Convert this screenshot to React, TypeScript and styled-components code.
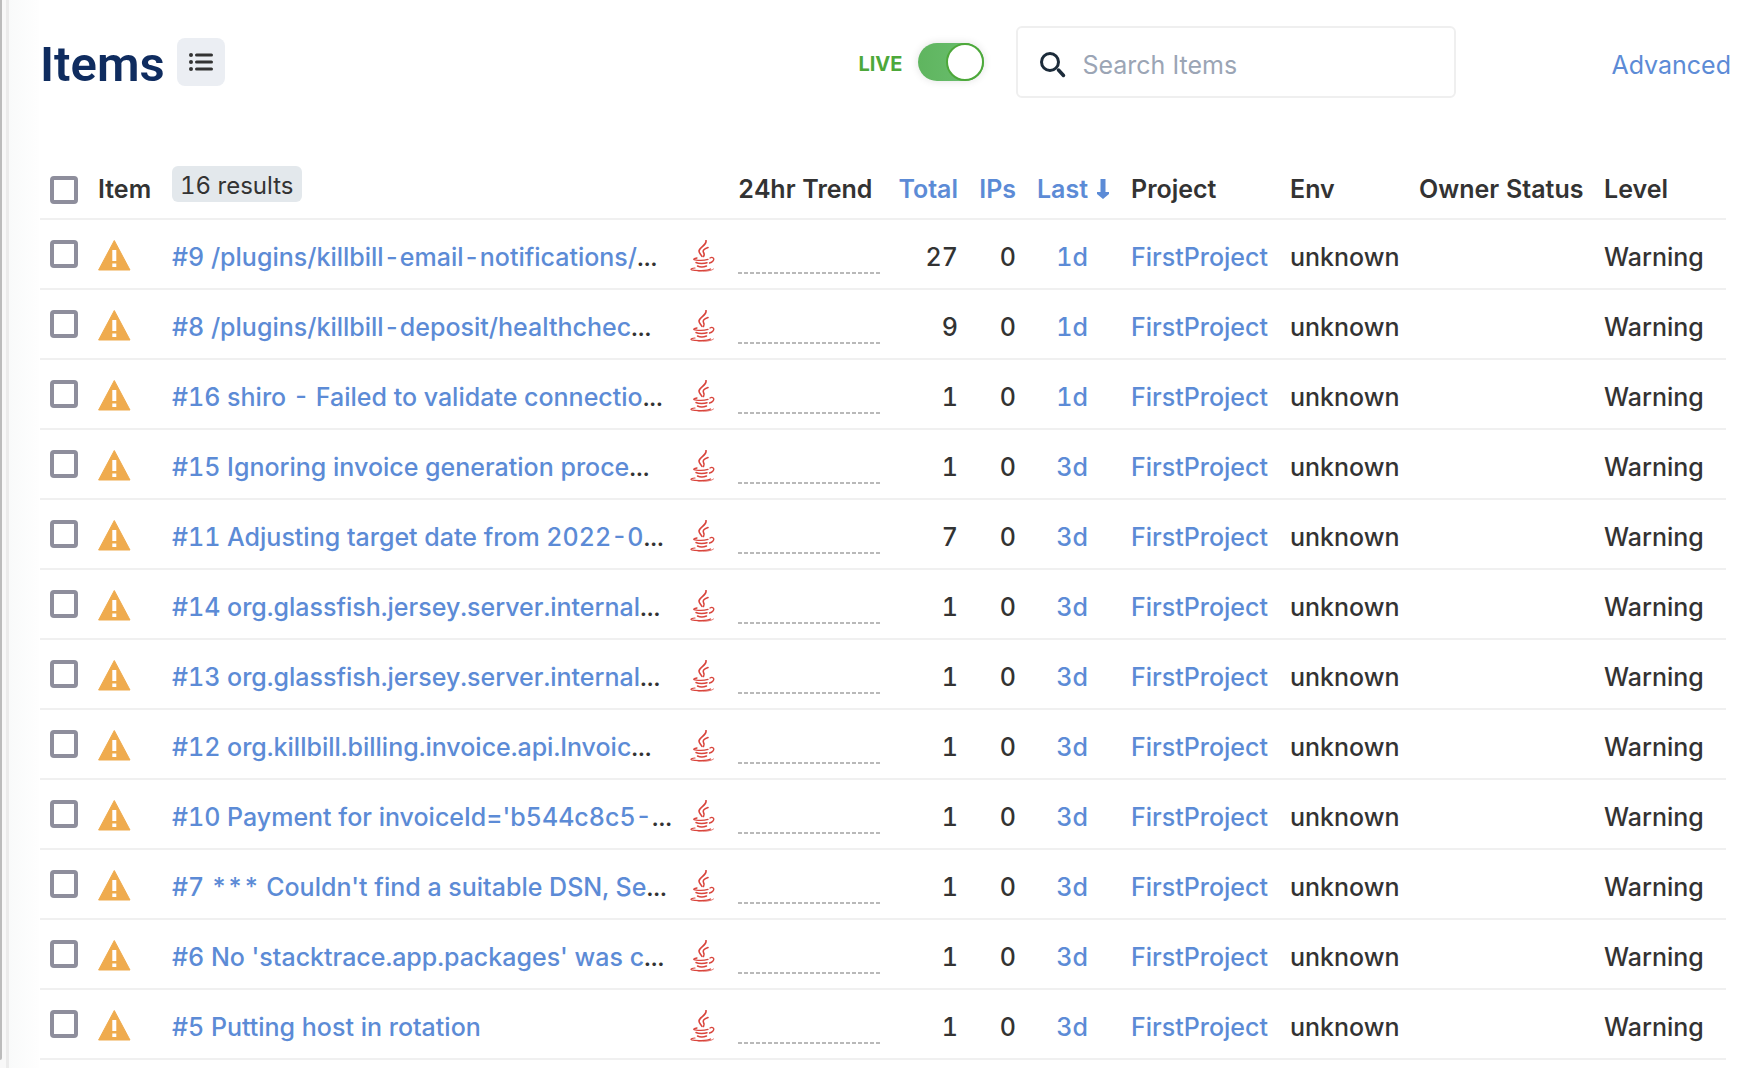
import React from "react";
import styled, { createGlobalStyle } from "styled-components";

const GlobalStyle = createGlobalStyle`
  *, *::before, *::after { box-sizing: border-box; }
  body {
    margin: 0;
    background: #fff;
    color: #333;
    font-family: Inter, "Liberation Sans", sans-serif;
    font-size: 25px;
    line-height: 30px;
  }
`;

const Page = styled.div`
  display: flex;
  min-height: 100vh;
`;

const Rail = styled.div`
  display: flex;
  flex: 0 0 40px;
  background: linear-gradient(to right, #f8f8f8 9px, #f9fafa 9px, #fefefe 38px, #fff 40px);
`;

const ScrollThumb = styled.div`
  width: 2px;
  margin-bottom: 8px;
  background: #bcbcbc;
  border-bottom-right-radius: 2px;
`;

const RailEdge = styled.div`
  width: 3px;
  margin-left: 4px;
  background: #ebebeb;
`;

const Main = styled.main`
  flex: 1;
  min-width: 0;
  padding-bottom: 8px;
`;

const Header = styled.header`
  display: flex;
  align-items: center;
  height: 149px;
  padding: 0 11px 25px 0;
`;

const Title = styled.h1`
  margin: 6px 12px 0 0;
  color: #0f2c5f;
  font-family: Roboto, sans-serif;
  font-size: 49px;
  font-weight: 600;
  line-height: 56px;
`;

const ListButton = styled.button`
  display: flex;
  align-items: center;
  justify-content: center;
  width: 48px;
  height: 48px;
  padding: 0;
  border: 0;
  border-radius: 8px;
  background: #ebeef3;
`;

const LiveToggle = styled.label`
  display: flex;
  align-items: center;
  gap: 16px;
  margin-left: auto;
  color: #4da83a;
  font-size: 20px;
  font-weight: 700;
`;

const LiveText = styled.span`
  padding-top: 4px;
`;

const Switch = styled.input`
  appearance: none;
  display: flex;
  justify-content: flex-end;
  width: 66px;
  height: 38px;
  margin: 0;
  border-radius: 19px;
  background: linear-gradient(to right, #5fb55f, #6bbf70);
  box-shadow: 0 0 8px rgba(0, 0, 0, 0.12);
  &::before {
    content: "";
    width: 38px;
    height: 38px;
    border: 2px solid #4da83a;
    border-radius: 50%;
    background: #fff;
  }
`;

const SearchBox = styled.label`
  display: flex;
  align-items: center;
  gap: 16px;
  width: 440px;
  height: 72px;
  margin-left: 32px;
  padding: 6px 22px 0;
  border: 2px solid #efefef;
  border-radius: 6px;
`;

const SearchInput = styled.input`
  flex: 1;
  min-width: 0;
  border: 0;
  outline: 0;
  padding: 0;
  background: transparent;
  color: #333;
  font: inherit;
  &::placeholder { color: #9ba5b5; opacity: 1; }
`;

const Advanced = styled.a`
  margin-left: 155px;
  padding-top: 6px;
  color: #5c8bd6;
  text-decoration: none;
`;

const ItemsTable = styled.table`
  width: calc(100% - 16px);
  table-layout: fixed;
  border-collapse: collapse;
  font-variant-numeric: tabular-nums;
`;

const HeadCell = styled.th<{ $align?: string }>`
  height: 70px;
  padding: 10px 0 0;
  border-bottom: 2px solid #f0f0f0;
  font-size: 25px;
  font-weight: 600;
  text-align: ${(p) => p.$align || "left"};
  white-space: nowrap;
`;

const Cell = styled.td<{ $align?: string }>`
  height: 70px;
  padding: 6px 0 0;
  border-bottom: 2px solid #f0f0f0;
  font-weight: 500;
  text-align: ${(p) => p.$align || "left"};
  white-space: nowrap;
`;

const CheckCell = styled(Cell)`
  padding: 0 0 0 10px;
`;

const CheckHead = styled(HeadCell)`
  padding: 12px 0 0 10px;
`;

const IconCell = styled(Cell)`
  padding: 4px 0 0;
`;

const TrendCell = styled(Cell)`
  padding: 38px 18px 0 0;
`;

const LastHead = styled(HeadCell)`
  padding-right: 22px;
`;

const LastCell = styled(Cell)`
  padding-right: 43px;
`;

const Check = styled.input`
  appearance: none;
  display: block;
  width: 28px;
  height: 28px;
  margin: 0;
  border: 4px solid #8e8e9c;
  border-radius: 4px;
  background: #fff;
`;

const TextLink = styled.a`
  color: #5c8bd6;
  text-decoration: none;
`;

const SortButton = styled.button`
  display: inline-flex;
  align-items: center;
  gap: 9px;
  padding: 0;
  border: 0;
  background: none;
  color: #5c8bd6;
  font: inherit;
`;

const Badge = styled.span`
  display: inline-block;
  margin-bottom: 10px;
  padding: 5px 8px 1px;
  border-radius: 6px;
  background: #e3e8ec;
  font-size: 24px;
  font-weight: 400;
  vertical-align: middle;
`;

const Trend = styled.div`
  height: 2px;
  background: repeating-linear-gradient(to right, #b9b9b9 0 4px, transparent 4px 6px);
`;

const Drawing = styled.svg`
  display: block;
`;

const WarningIcon = () => (
  <Drawing width="33" height="32" viewBox="0 0 33 32" role="img" aria-label="Warning">
    <path d="M16.300 .5 32 30H.6Z" fill="#efab4e" stroke="#efab4e" strokeLinejoin="round" />
    <path d="M14.300 10h4v11h-4zM14.300 23.500h4V27h-4z" fill="#fff" />
  </Drawing>
);

const JavaIcon = () => (
  <Drawing width="25" height="32" viewBox="0 0 25 32" role="img" aria-label="Java">
    <g fill="none" stroke="#d9453c" strokeLinecap="round">
      <path d="M16 .5c1 5-7 6.500-7 10.500 0 2 2 3.500 3 5.500" strokeWidth="1.600" />
      <path d="M18 7.500c-4 1.500-5.500 3-4.500 5 1 1.500 1 2.500 0 4" strokeWidth="1.600" />
      <path d="M7 18c-3 .6-4.500 1.300-2 1.800 4 .8 10 .5 13-.5" strokeWidth="1.300" />
      <path d="M20 18c2.500-1.500 5 .5 3 3-.8 1-2 1.700-3.500 2" strokeWidth="1.300" />
      <path d="M6 22.500c2.500 1.300 8.500 1.200 11 .2M7.500 26c2.500 1.200 6.500 1 9 0" strokeWidth="1.500" />
      <path d="M5 28c-3 .2-5 1.300-3.500 1.800 3.500 1 16 1.200 19-.8" strokeWidth="1.200" />
      <path d="M8 31c6 .6 13 .2 15.500-2" strokeWidth="0.800" />
    </g>
  </Drawing>
);

const items: [string, boolean, number, string][] = [
  ["#9 /plugins/killbill-email-notifications/", true, 27, "1d"],
  ["#8 /plugins/killbill-deposit/healthchec", true, 9, "1d"],
  ["#16 shiro - Failed to validate connectio", true, 1, "1d"],
  ["#15 Ignoring invoice generation proce", true, 1, "3d"],
  ["#11 Adjusting target date from 2022-0", true, 7, "3d"],
  ["#14 org.glassfish.jersey.server.internal", true, 1, "3d"],
  ["#13 org.glassfish.jersey.server.internal", true, 1, "3d"],
  ["#12 org.killbill.billing.invoice.api.Invoic", true, 1, "3d"],
  ["#10 Payment for invoiceId='b544c8c5-", true, 1, "3d"],
  ["#7 *** Couldn't find a suitable DSN, Se", true, 1, "3d"],
  ["#6 No 'stacktrace.app.packages' was c", true, 1, "3d"],
  ["#5 Putting host in rotation", false, 1, "3d"],
];

const columnWidths = [58, 74, 518, 48, 160, 60, 58, 115, 159, 129, 87, 98];

export default function App() {
  return (
    <Page>
      <GlobalStyle />
      <Rail>
        <ScrollThumb />
        <RailEdge />
      </Rail>
      <Main>
        <Header>
          <Title>Items</Title>
          <ListButton type="button" aria-label="List view">
            <Drawing width="24" height="18" viewBox="0 0 24 18">
              <g fill="#333">
                <circle cx="2" cy="2" r="2" />
                <circle cx="2" cy="9" r="2" />
                <circle cx="2" cy="16" r="2" />
                <rect x="6" y="0.500" width="18" height="3" rx="1.500" />
                <rect x="6" y="7.500" width="18" height="3" rx="1.500" />
                <rect x="6" y="14.500" width="18" height="3" rx="1.500" />
              </g>
            </Drawing>
          </ListButton>
          <LiveToggle>
            <LiveText>LIVE</LiveText>
            <Switch type="checkbox" role="switch" defaultChecked />
          </LiveToggle>
          <SearchBox>
            <Drawing width="26" height="26" viewBox="0 0 26 26" fill="none" stroke="#1c2b3a" strokeLinecap="round">
              <circle cx="10" cy="10" r="8.500" strokeWidth="3" />
              <path d="M18.500 18 23.500 23.500" strokeWidth="3.500" />
            </Drawing>
            <SearchInput type="search" placeholder="Search Items" aria-label="Search Items" />
          </SearchBox>
          <Advanced href="#advanced">Advanced</Advanced>
        </Header>
        <ItemsTable>
          <colgroup>
            {columnWidths.map((w, i) => (
              <col key={i} style={{ width: w }} />
            ))}
            <col />
          </colgroup>
          <thead>
            <tr>
              <CheckHead><Check type="checkbox" aria-label="Select all items" /></CheckHead>
              <HeadCell>Item</HeadCell>
              <HeadCell><Badge>16 results</Badge></HeadCell>
              <HeadCell />
              <HeadCell>24hr Trend</HeadCell>
              <HeadCell $align="right"><SortButton type="button">Total</SortButton></HeadCell>
              <HeadCell $align="right"><SortButton type="button">IPs</SortButton></HeadCell>
              <LastHead $align="right">
                <SortButton type="button">
                  Last
                  <Drawing width="12" height="22" viewBox="0 0 12 22">
                    <path d="M3.500 1h5v13H12v2l-6 5-6-5v-2h3.500z" fill="#5c8bd6" />
                  </Drawing>
                </SortButton>
              </LastHead>
              <HeadCell>Project</HeadCell>
              <HeadCell>Env</HeadCell>
              <HeadCell>Owner</HeadCell>
              <HeadCell>Status</HeadCell>
              <HeadCell>Level</HeadCell>
            </tr>
          </thead>
          <tbody>
            {items.map(([title, cut, total, last]) => (
              <tr key={title}>
                <CheckCell><Check type="checkbox" aria-label={title} /></CheckCell>
                <IconCell><WarningIcon /></IconCell>
                <Cell><TextLink href="#item">{title}</TextLink>{cut && "..."}</Cell>
                <IconCell><JavaIcon /></IconCell>
                <TrendCell><Trend /></TrendCell>
                <Cell $align="right">{total}</Cell>
                <Cell $align="right">0</Cell>
                <LastCell $align="right"><TextLink href="#last">{last}</TextLink></LastCell>
                <Cell><TextLink href="#project">FirstProject</TextLink></Cell>
                <Cell>unknown</Cell>
                <Cell />
                <Cell />
                <Cell>Warning</Cell>
              </tr>
            ))}
          </tbody>
        </ItemsTable>
      </Main>
    </Page>
  );
}
